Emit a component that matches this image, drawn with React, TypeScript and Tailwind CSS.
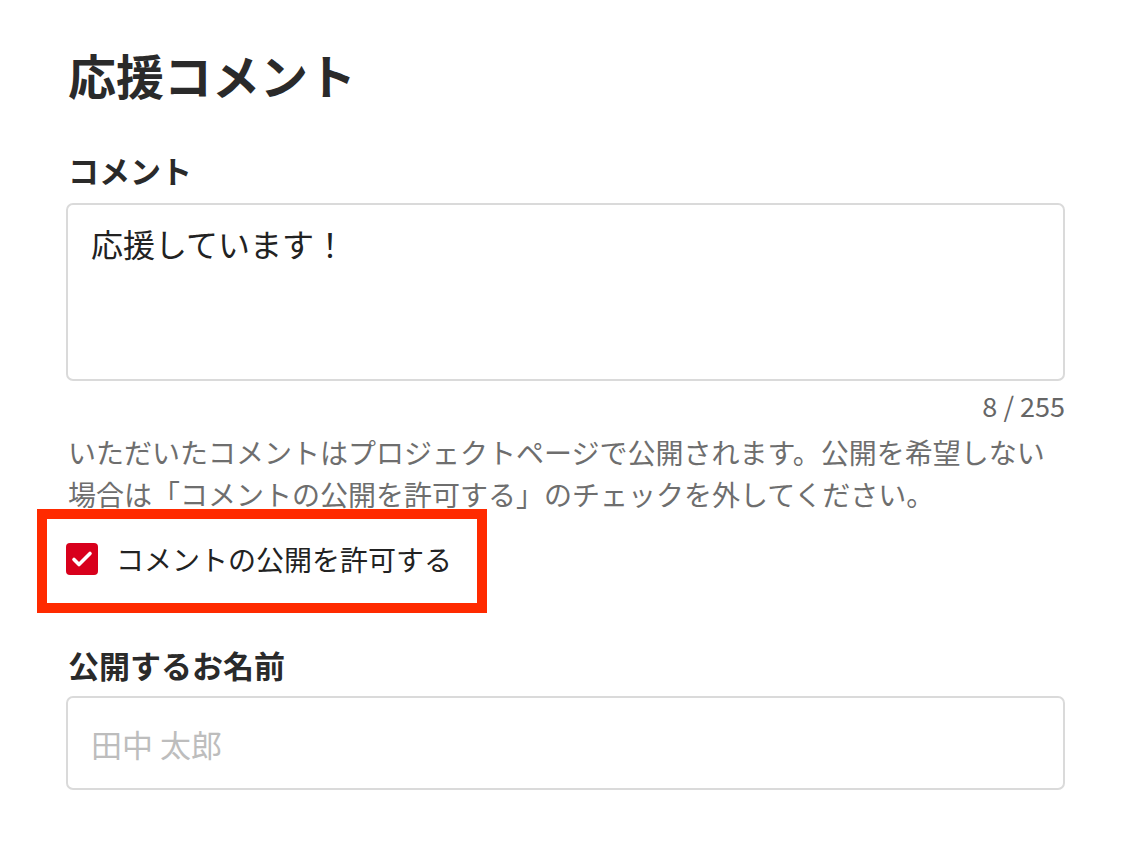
import { useState } from 'react';

export default function App() {
  const [comment, setComment] = useState('応援しています！');
  const [allow, setAllow] = useState(true);

  return (
    <div
      className="min-h-[842px] w-[1128px] bg-white text-[#222]"
      style={{ fontFamily: '"Noto Sans CJK JP", "Noto Sans", sans-serif' }}
    >
      <div className="ml-[66px] flex w-[999px] flex-col pt-[40px]">
        <h1 className="pl-[2px] text-[48px] font-bold leading-[69px] text-[#2a2a2a]">応援コメント</h1>

        {/* Comment */}
        <label className="mt-[43px] pl-[2px] text-[31px] font-bold leading-[36px] text-[#2a2a2a]">コメント</label>
        <textarea
          value={comment}
          onChange={(e) => setComment(e.target.value)}
          maxLength={255}
          className="mt-[15px] h-[178px] w-full resize-none rounded-[7px] border-2 border-[#dadada] px-[23px] py-[16px] text-[32px] leading-[44px] text-[#222] outline-none"
        />
        <div className="mt-[9px] text-right text-[27px] leading-[32px] text-[#666]">
          {comment.length} / 255
        </div>
        <p className="mt-[9px] pl-[2px] text-[28px] leading-[42px] text-[#6e6e6e]">
          いただいたコメントはプロジェクトページで公開されます。公開を希望しない
          <br />
          場合は「コメントの公開を許可する」のチェックを外してください。
        </p>

        {/* Highlighted checkbox */}
        <div className="-ml-[29px] -mt-[6px] flex h-[104px] w-[450px] items-center border-[10px] border-[#ff2a00] pb-[4px] pl-[19px]">
          <button
            type="button"
            onClick={() => setAllow(!allow)}
            className={`flex h-[32px] w-[32px] shrink-0 items-center justify-center rounded-[4px] ${allow ? 'bg-[#d8001c]' : 'border-2 border-[#ccc] bg-white'}`}
          >
            {allow && (
              <svg width="22" height="18" viewBox="0 0 22 18" fill="none">
                <path d="M3 9.5l5 5L19 3.5" stroke="white" strokeWidth="3.6" strokeLinecap="round" strokeLinejoin="round" />
              </svg>
            )}
          </button>
          <span className="ml-[18px] text-[28px] leading-[40px] text-[#222]">コメントの公開を許可する</span>
        </div>

        {/* Name */}
        <label className="mt-[34px] pl-[2px] text-[31px] font-bold leading-[36px] text-[#2a2a2a]">公開するお名前</label>
        <input
          placeholder="田中 太郎"
          className="mt-[13px] h-[94px] w-full rounded-[7px] border-2 border-[#dadada] px-[23px] text-[31px] text-[#222] outline-none placeholder:text-[#bdbdbd]"
        />
      </div>
    </div>
  );
}
